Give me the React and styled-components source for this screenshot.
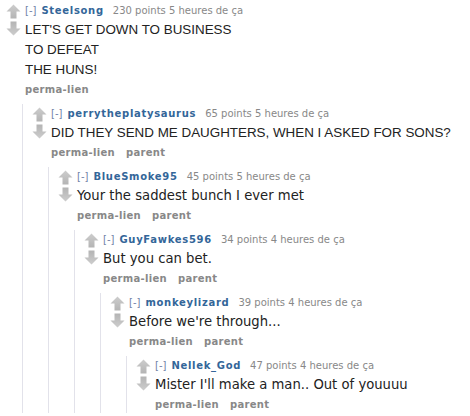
import React from 'react';
import styled, { createGlobalStyle } from 'styled-components';

const GlobalStyle = createGlobalStyle`
  html, body {
    margin: 0;
    padding: 0;
    background: #ffffff;
  }
  body {
    font-family: "DejaVu Sans", Verdana, sans-serif;
  }
`;

const thread = {
  author: 'Steelsong',
  score: 230,
  age: '5 heures de ça',
  caps: true,
  root: true,
  lines: ["LET'S GET DOWN TO BUSINESS", 'TO DEFEAT', 'THE HUNS!'],
  reply: {
    author: 'perrytheplatysaurus',
    score: 65,
    age: '5 heures de ça',
    caps: true,
    lines: ['DID THEY SEND ME DAUGHTERS, WHEN I ASKED FOR SONS?'],
    reply: {
      author: 'BlueSmoke95',
      score: 45,
      age: '5 heures de ça',
      lines: ['Your the saddest bunch I ever met'],
      reply: {
        author: 'GuyFawkes596',
        score: 34,
        age: '4 heures de ça',
        lines: ['But you can bet.'],
        reply: {
          author: 'monkeylizard',
          score: 39,
          age: '4 heures de ça',
          lines: ["Before we're through..."],
          reply: {
            author: 'Nellek_God',
            score: 47,
            age: '4 heures de ça',
            lines: ["Mister I'll make a man.. Out of youuuu"],
          },
        },
      },
    },
  },
};

const Page = styled.div`
  padding: 3px 0 0 6px;
  height: 416px;
  box-sizing: border-box;
  overflow: hidden;
`;

const CommentBox = styled.div`
  display: block;
`;

const Row = styled.div`
  display: flex;
  align-items: flex-start;
  gap: 4px;
`;

const Arrows = styled.div`
  display: flex;
  flex-direction: column;
  gap: 2px;
  margin-top: 1px;
  width: 15px;
  flex-shrink: 0;
`;

const Entry = styled.div`
  flex: 1;
  min-width: 0;
`;

const Tagline = styled.p`
  margin: 0;
  font-size: 10px;
  line-height: 16px;
  color: #888888;
  white-space: nowrap;
`;

const Expand = styled.span`
  color: #6f83a8;
  margin-right: 5px;
`;

const Author = styled.span`
  color: #336699;
  font-weight: bold;
  letter-spacing: 0.7px;
  margin-right: 9px;
`;

const Body = styled.div`
  margin-top: 1px;
  color: #222222;
  font-family: ${(p) => (p.$caps ? '"Liberation Sans", Arial, sans-serif' : '"DejaVu Sans", Verdana, sans-serif')};
  font-size: ${(p) => (p.$caps ? '13.4px' : '13.2px')};
  line-height: 20px;

  p {
    margin: 0;
    white-space: nowrap;
  }
`;

const Buttons = styled.ul`
  display: flex;
  gap: 11px;
  list-style: none;
  margin: 0;
  padding: 2px 0 0 0;
  font-size: 10px;
  font-weight: bold;
  letter-spacing: 0.3px;
  line-height: 16px;
  color: #888888;
`;

const Child = styled.div`
  margin: 6px 0 0 16px;
  padding: 2px 0 0 9px;
  border-left: 1px solid #e2e2ea;
`;

const Arrow = ({ down }) => (
  <svg
    width="15"
    height="15"
    viewBox="0 0 15 15"
    style={down ? { transform: 'rotate(180deg)', display: 'block' } : { display: 'block' }}
  >
    <defs>
      <linearGradient id={down ? 'gd' : 'gu'} x1="0" y1="0" x2="0" y2="1">
        <stop offset="0" stopColor="#cdcdcd" />
        <stop offset="1" stopColor="#b4b4b4" />
      </linearGradient>
    </defs>
    <path
      d="M7.5 0.5 L14.5 7.5 L10.5 7.5 L10.5 14.5 L4.5 14.5 L4.5 7.5 L0.5 7.5 Z"
      fill={`url(#${down ? 'gd' : 'gu'})`}
    />
  </svg>
);

const Comment = ({ data }) => (
  <CommentBox>
    <Row>
      <Arrows>
        <Arrow />
        <Arrow down />
      </Arrows>
      <Entry>
        <Tagline>
          <Expand>[-]</Expand>
          <Author>{data.author}</Author>
          {data.score} points {data.age}
        </Tagline>
        <Body $caps={data.caps}>
          {data.lines.map((l) => (
            <p key={l}>{l}</p>
          ))}
        </Body>
        <Buttons>
          <li>perma-lien</li>
          {!data.root && <li>parent</li>}
        </Buttons>
      </Entry>
    </Row>
    {data.reply && (
      <Child>
        <Comment data={data.reply} />
      </Child>
    )}
  </CommentBox>
);

export default function App() {
  return (
    <>
      <GlobalStyle />
      <Page>
        <Comment data={thread} />
      </Page>
    </>
  );
}
